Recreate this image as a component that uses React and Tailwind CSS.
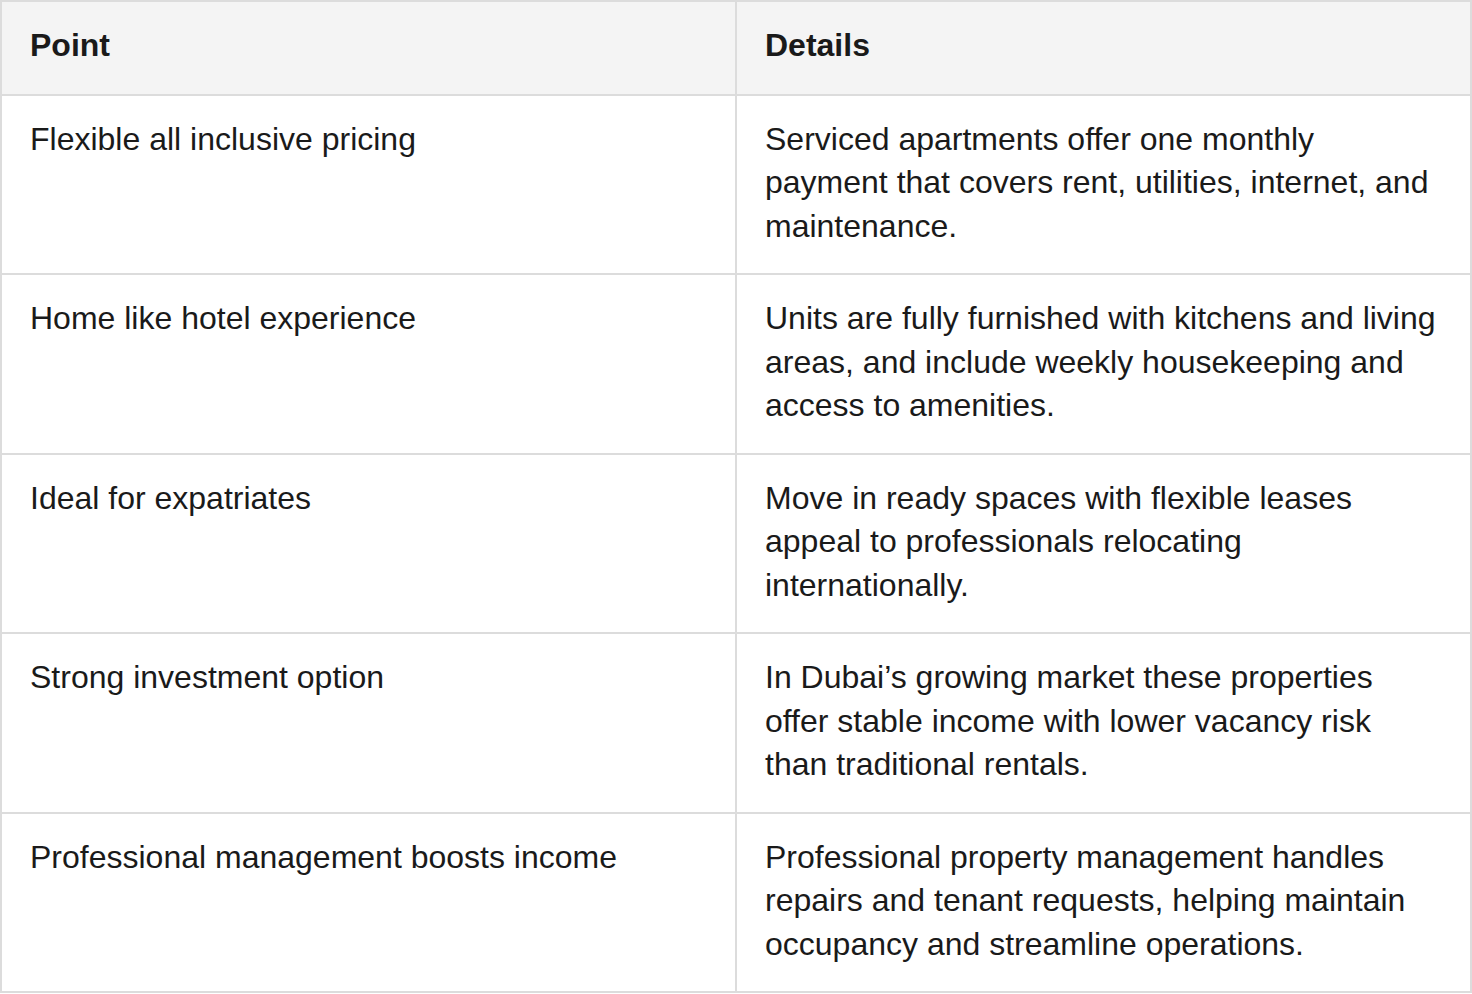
import React from "react";

const rows = [
  ["Flexible all inclusive pricing", "Serviced apartments offer one monthly payment that covers rent, utilities, internet, and maintenance."],
  ["Home like hotel experience", "Units are fully furnished with kitchens and living areas, and include weekly housekeeping and access to amenities."],
  ["Ideal for expatriates", "Move in ready spaces with flexible leases appeal to professionals relocating internationally."],
  ["Strong investment option", "In Dubai\u2019s growing market these properties offer stable income with lower vacancy risk than traditional rentals."],
  ["Professional management boosts income", "Professional property management handles repairs and tenant requests, helping maintain occupancy and streamline operations."],
];

export default function App() {
  return (
    <div className="bg-white w-[1472px]" style={{ fontFamily: '"Liberation Sans", Arial, sans-serif' }}>
      <table className="w-full table-fixed border-collapse border-2 border-[#dcdcdc] text-[32px] leading-[43.5px] text-[#1a1a1a]">
        <thead>
          <tr className="bg-[#f4f4f4]">
            <th className="border-2 border-[#dcdcdc] px-[28px] pt-[22px] pb-[26px] text-left font-bold">Point</th>
            <th className="border-2 border-[#dcdcdc] px-[28px] pt-[22px] pb-[26px] text-left font-bold">Details</th>
          </tr>
        </thead>
        <tbody>
          {rows.map(([a, b]) => (
            <tr key={a}>
              <td className="border-2 border-[#dcdcdc] px-[28px] pt-[22px] pb-[25px] align-top">{a}</td>
              <td className="border-2 border-[#dcdcdc] px-[28px] pt-[22px] pb-[25px] align-top">{b}</td>
            </tr>
          ))}
        </tbody>
      </table>
    </div>
  );
}
